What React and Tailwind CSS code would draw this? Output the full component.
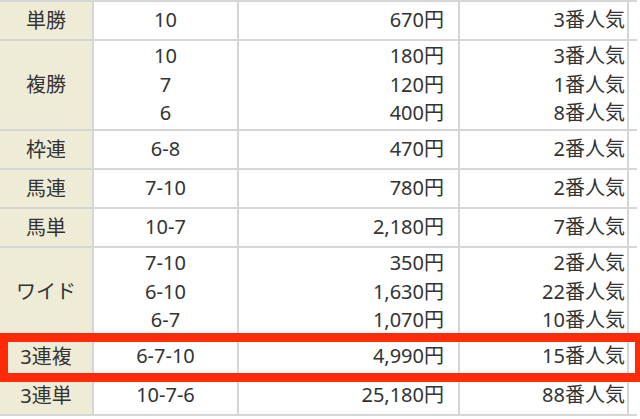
const rows = [
  { label: "単勝", items: [["10", "670円", "3番人気"]] },
  {
    label: "複勝",
    items: [
      ["10", "180円", "3番人気"],
      ["7", "120円", "1番人気"],
      ["6", "400円", "8番人気"],
    ],
  },
  { label: "枠連", items: [["6-8", "470円", "2番人気"]] },
  { label: "馬連", items: [["7-10", "780円", "2番人気"]] },
  { label: "馬単", items: [["10-7", "2,180円", "7番人気"]] },
  {
    label: "ワイド",
    items: [
      ["7-10", "350円", "2番人気"],
      ["6-10", "1,630円", "22番人気"],
      ["6-7", "1,070円", "10番人気"],
    ],
  },
  { label: "3連複", items: [["6-7-10", "4,990円", "15番人気"]] },
  { label: "3連単", items: [["10-7-6", "25,180円", "88番人気"]] },
];

function Cell({ lines, className }) {
  return (
    <div className={"flex flex-col justify-center " + className}>
      {lines.map((l, i) => (
        <div key={i} className="leading-[28.5px]">
          {l}
        </div>
      ))}
    </div>
  );
}

export default function App() {
  return (
    <div
      className="relative w-[640px] h-[419px] bg-white text-[#333] text-[20px] overflow-hidden"
      style={{ fontFamily: '"Noto Sans", "Noto Sans CJK JP", sans-serif' }}
    >
      <div className="w-[637px] border-t-2 border-[#d6d6d6]">
        {rows.map((r) => {
          const multi = r.items.length > 1;
          return (
            <div
              key={r.label}
              className={
                "flex border-b-2 border-[#d6d6d6] " +
                (multi ? "h-[90px]" : "h-[39px]")
              }
            >
              <div className="w-[94px] shrink-0 bg-[#eeecd6] flex items-center justify-center border-r-2 border-[#d6d6d6]">
                {r.label}
              </div>
              <Cell
                lines={r.items.map((x) => x[0])}
                className="w-[145px] shrink-0 items-center text-center border-r-2 border-[#d6d6d6]"
              />
              <Cell
                lines={r.items.map((x) => x[1])}
                className="w-[221px] shrink-0 items-end pr-[14px] border-r-2 border-[#d6d6d6]"
              />
              <Cell
                lines={r.items.map((x) => x[2])}
                className="w-[169px] shrink-0 items-end pr-[2px] border-r-2 border-[#d6d6d6]"
              />
            </div>
          );
        })}
      </div>
      <div className="absolute left-0 top-[333px] w-[640px] h-[49px] border-l-[8px] border-r-[5px] border-y-[9px] border-[#ff2a08]" />
    </div>
  );
}
